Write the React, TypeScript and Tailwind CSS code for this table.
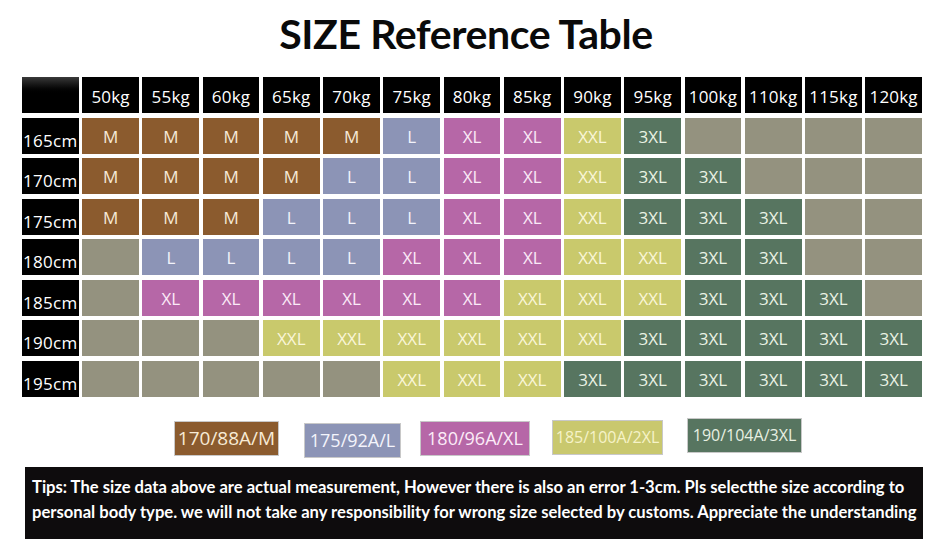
const WEIGHTS = ['50kg', '55kg', '60kg', '65kg', '70kg', '75kg', '80kg', '85kg', '90kg', '95kg', '100kg', '110kg', '115kg', '120kg'];

type Size = 'M' | 'L' | 'XL' | 'XXL' | '3XL' | '';

const ROWS: { h: string; sizes: Size[] }[] = [
  { h: '165cm', sizes: ['M', 'M', 'M', 'M', 'M', 'L', 'XL', 'XL', 'XXL', '3XL', '', '', '', ''] },
  { h: '170cm', sizes: ['M', 'M', 'M', 'M', 'L', 'L', 'XL', 'XL', 'XXL', '3XL', '3XL', '', '', ''] },
  { h: '175cm', sizes: ['M', 'M', 'M', 'L', 'L', 'L', 'XL', 'XL', 'XXL', '3XL', '3XL', '3XL', '', ''] },
  { h: '180cm', sizes: ['', 'L', 'L', 'L', 'L', 'XL', 'XL', 'XL', 'XXL', 'XXL', '3XL', '3XL', '', ''] },
  { h: '185cm', sizes: ['', 'XL', 'XL', 'XL', 'XL', 'XL', 'XL', 'XXL', 'XXL', 'XXL', '3XL', '3XL', '3XL', ''] },
  { h: '190cm', sizes: ['', '', '', 'XXL', 'XXL', 'XXL', 'XXL', 'XXL', 'XXL', '3XL', '3XL', '3XL', '3XL', '3XL'] },
  { h: '195cm', sizes: ['', '', '', '', '', 'XXL', 'XXL', 'XXL', '3XL', '3XL', '3XL', '3XL', '3XL', '3XL'] },
];

const CELL: Record<string, string> = {
  M: 'bg-[#8b5b2e] text-[#f6e9d6]',
  L: 'bg-[#8c94b6] text-[#f2f3fb]',
  XL: 'bg-[#b667a7] text-[#fbeaf7]',
  XXL: 'bg-[#c9c96c] text-[#faf6d8]',
  '3XL': 'bg-[#577560] text-[#eaf2e4]',
  '': 'bg-[#94927f]',
};

const LEGEND = [
  { label: '170/88A/M', cls: 'bg-[#8b5b2e] text-[#f7ead5] w-[105px] ml-[174px] mt-[3px] text-[19px]' },
  { label: '175/92A/L', cls: 'bg-[#8c94b6] text-[#f4f5fc] w-[97px] ml-[25px] mt-[5px] text-[18px]' },
  { label: '180/96A/XL', cls: 'bg-[#b667a7] text-[#fcecf8] w-[110px] ml-[19px] mt-[3px] text-[18px]' },
  { label: '185/100A/2XL', cls: 'bg-[#c9c86e] text-[#f6f3c8] w-[111px] ml-[22px] mt-[2px] text-[16px]' },
  { label: '190/104A/3XL', cls: 'bg-[#577560] text-[#e8f0e2] w-[115px] ml-[24px] mt-0 text-[16px]' },
];

export default function App() {
  return (
    <div className="w-[942px] h-[552px] bg-white overflow-hidden font-['Open_Sans',sans-serif]">
      {/* Title */}
      <div className="h-[77px] flex justify-center pt-[13px] pr-[10px]">
        <h1 className="font-['Lato',sans-serif] font-bold text-[41px] leading-none text-[#0a0a0a] tracking-[-0.4px]">
          SIZE Reference Table
        </h1>
      </div>

      {/* Size grid */}
      <div className="ml-[22px] w-[900px] grid grid-cols-[repeat(15,minmax(0,1fr))] auto-rows-[36px] gap-x-[3.5px] gap-y-[4.5px]">
        <div className="bg-gradient-to-b from-[#3a3a3a] via-black to-black" />
        {WEIGHTS.map(w => (
          <div key={w} className="bg-black text-white text-[17px] flex items-center justify-center pt-[3px] tracking-[0.2px]">
            {w}
          </div>
        ))}
        {ROWS.map(row => (
          <div key={row.h} className="contents">
            <div className="bg-black text-white text-[17px] leading-none flex items-end pl-[1px] pb-[5px] tracking-[0.3px]">
              {row.h}
            </div>
            {row.sizes.map((s, i) => (
              <div key={i} className={`${CELL[s]} text-[17px] font-medium flex items-center justify-center pt-[2px]`}>
                {s}
              </div>
            ))}
          </div>
        ))}
      </div>

      {/* Legend */}
      <div className="flex items-start h-[70px] pt-[21px]">
        {LEGEND.map(l => (
          <div
            key={l.label}
            className={`${l.cls} h-[35px] flex items-center justify-center border border-[#c8c8c8] whitespace-nowrap leading-none`}
          >
            {l.label}
          </div>
        ))}
      </div>

      {/* Tips */}
      <div className="ml-[25px] w-[898px] h-[72px] bg-[#0e0c0d] text-white font-['Lato',sans-serif] font-bold text-[16.6px] leading-[25px] pl-[7px] pt-[8px] whitespace-nowrap">
        <div>Tips: The size data above are actual measurement, However there is also an error 1-3cm. Pls selectthe size according to</div>
        <div>personal body type. we will not take any responsibility for wrong size selected by customs. Appreciate the understanding</div>
      </div>
    </div>
  );
}
